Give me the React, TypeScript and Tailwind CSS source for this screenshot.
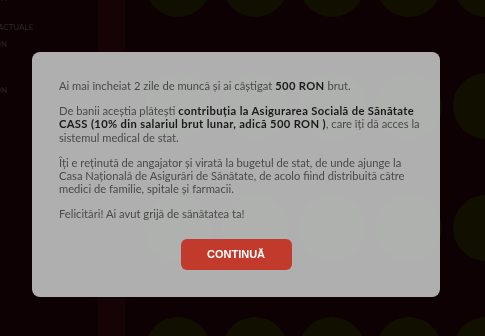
import React from "react";

const days = Array.from({ length: 20 }, (_, i) => i + 1);

const Popup = ({ onClose }: { onClose: () => void }) => {
    const strong = "font-bold text-[#1b1a1a] tracking-[0.35px]";
    return (
        <div className="fixed inset-0 z-50 pl-[32px] pt-[52px]">
            <div className="w-[408px] h-[245px] rounded-lg bg-[#b6b8b8]/95 backdrop-brightness-[3] px-[27px] pt-[27px] text-[11.2px] leading-[13.3px] text-[#4b4949] font-['Lato',sans-serif] whitespace-nowrap">
                <p>
                    Ai mai încheiat 2 zile de muncă și ai câștigat <b className={strong}>500 RON</b> brut.
                </p>
                <p className="mt-[11.7px]">
                    De banii aceștia plătești <b className={strong}>contribuția la Asigurarea Socială de Sănătate</b>
                    <br />
                    <b className={strong}>CASS (10% din salariul brut lunar, adică 500 RON )</b>, care îți dă acces la
                    <br />
                    sistemul medical de stat.
                </p>
                <p className="mt-[11.7px]">
                    Îți e reținută de angajator și virată la bugetul de stat, de unde ajunge la
                    <br />
                    Casa Națională de Asigurări de Sănătate, de acolo fiind distribuită către
                    <br />
                    medici de familie, spitale și farmacii.
                </p>
                <p className="mt-[11.7px]">Felicitări! Ai avut grijă de sănătatea ta!</p>
                <div className="flex justify-center pt-[19px]">
                    <button
                        onClick={onClose}
                        className="w-[111px] h-[31px] rounded-md bg-[#c13a2c] text-white text-[11px] font-bold font-['Liberation_Sans',Arial,sans-serif]">
                        CONTINUĂ
                    </button>
                </div>
            </div>
        </div>
    );
};

export default function App() {
    return (
        <div className="relative w-full h-[336px] overflow-hidden bg-[#0d0103] flex">
            {/* sidebar, pushed off the left edge */}
            <div className="w-[98px] shrink-0 overflow-hidden">
                <div className="-ml-[47px] -mt-[7px] text-[8px] leading-[10px] text-[#2a2828] whitespace-nowrap font-['Lato',sans-serif] uppercase">
                    <div>Buget: 5 RON</div>
                    <div className="mt-[19px]">Cheltuieli actuale</div>
                    <div className="mt-[7px]">Buget: 5 RON</div>
                    <div className="mt-[36px]">Buget: 5 RON</div>
                </div>
            </div>
            <div className="w-[27px] shrink-0 bg-[#150305]" />
            {/* calendar */}
            <div className="flex-1 pl-[20px] -mt-[49px]">
                <div className="grid grid-cols-[repeat(5,66px)] gap-x-[11px] gap-y-[56px] w-max">
                    {days.map((d) => (
                        <div key={d} className="w-[66px] h-[66px] rounded-full bg-[#110f00]" />
                    ))}
                </div>
            </div>
            <Popup onClose={() => {}} />
        </div>
    );
}
